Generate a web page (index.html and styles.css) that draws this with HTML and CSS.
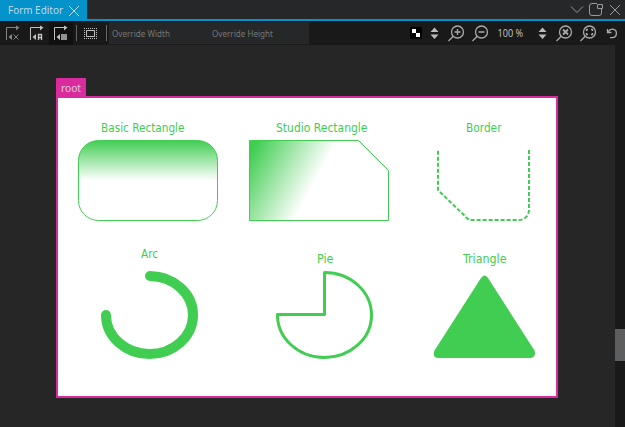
FILE: index.html
```html
<!DOCTYPE html>
<html lang="en">
<head>
<meta charset="utf-8">
<title>Form Editor</title>
<link rel="stylesheet" href="styles.css">
</head>
<body>
<header class="tabs">
  <div class="tab">
    <svg width="87" height="19"><text x="8" y="13.5" textLength="55" lengthAdjust="spacingAndGlyphs">Form Editor</text><path d="M69 6l10 10M79 6l-10 10" class="line"/></svg>
  </div>
  <svg class="window" width="57" height="19" viewBox="568 0 57 19">
    <path d="M571 6.500l6 6 6-6M610 5l10 10M620 5l-10 10"/>
    <path d="M597 3.500h-5q-2.500 0-2.500 2.500v7q0 2.500 2.500 2.500h7q2.500 0 2.500-2.500v-4M597.500 4.500h5v4h-5z"/>
  </svg>
</header>
<nav class="toolbar">
  <svg width="24" height="24" viewBox="0 21 24 24" class="dim"><path d="M6.500 40V27.500H19" class="line"/><path d="M12 34v6l-3.500-3zM16 25.500l3.500 2-3.500 3z" fill="currentColor"/><path d="M13.500 34.500l5 5M18.500 34.500l-5 5" class="line"/></svg>
  <svg width="25" height="24" viewBox="24 21 25 24"><path d="M30.500 40V27.500H43" class="line"/><path d="M36 34v6l-3.500-3zM40 25.500l3.500 2-3.500 3z" fill="currentColor"/><path d="M38.500 40v-5.500h3V40M38.500 37.500h3" class="line letter"/></svg>
  <svg class="active" width="24" height="24" viewBox="49 21 24 24"><path d="M54.500 40V27.500H67" class="line"/><path d="M60 34v6l-3.500-3zM64 25.500l3.500 2-3.500 3z" fill="currentColor"/><path d="M61 34h6v6h-6z" fill="#929292"/></svg>
  <svg width="36" height="24" viewBox="73 21 36 24"><path d="M76.500 25v16M106.500 25v16" stroke="#666"/><path d="M84 28.500h13M84 38.500h13M84.500 30v8M96.500 30v8" class="dots"/><path d="M86.500 30.500h8v6h-8z" class="marquee"/></svg>
  <div class="fields"><svg width="200" height="22"><text x="3" y="15" textLength="58" lengthAdjust="spacingAndGlyphs">Override Width</text><text x="103" y="15" textLength="61" lengthAdjust="spacingAndGlyphs">Override Height</text></svg></div>
  <svg class="right" width="216" height="24" viewBox="409 21 216 24">
    <path d="M410 27h12v12h-12z" fill="#000"/><path d="M412 29h4v4h-4zM416 33h4v4h-4z" fill="#fff"/>
    <path d="M430.500 32l4-4.500 4 4.500zM430.500 34.500l4 4.500 4-4.500zM538.500 32l4-4.500 4 4.500zM538.500 34.500l4 4.500 4-4.500z" fill="#bbb"/>
    <g class="lens"><circle cx="457.500" cy="32" r="6"/><path d="M453 36.500l-4.500 4.500M454.500 32h6M457.500 29v6"/></g>
    <g class="lens"><circle cx="481.500" cy="32" r="6"/><path d="M477 36.500l-4.500 4.500M478.500 32h6"/></g>
    <text class="zoom" x="497.500" y="37" textLength="25.500" lengthAdjust="spacingAndGlyphs">100 %</text>
    <g class="lens"><circle cx="565.500" cy="32" r="6"/><path d="M561 36.500l-4.500 4.500"/><path d="M563 29.500l5 5M568 29.500l-5 5" stroke-width="1.800"/></g>
    <g class="lens"><circle cx="589.500" cy="32" r="6"/><path d="M585 36.500l-4.500 4.500M588 29.500h-1.500v1.500M591 29.500h1.500v1.500M588 34.500h-1.500v-1.500M591 34.500h1.500v-1.500"/></g>
    <g class="lens"><path d="M607.500 29v3.500h4"/><path d="M608 32q2-3.500 5-2.800a4.300 4.300 0 0 1-1 8.500h-2"/></g>
  </svg>
</nav>
<main class="workspace">
  <section class="canvas">
    <div class="root-label"><svg width="30" height="18"><text x="5" y="14" textLength="20" lengthAdjust="spacingAndGlyphs">root</text></svg></div>
    <div class="root">
      <svg viewBox="58 98 174 134">
        <defs><linearGradient id="down" x1="0" y1="0" x2="0" y2="1"><stop stop-color="#41cd52"/><stop offset=".5" stop-color="#fff"/></linearGradient></defs>
        <text x="101" y="132" textLength="83.500" lengthAdjust="spacingAndGlyphs">Basic Rectangle</text>
        <rect x="78.500" y="140.500" width="139" height="80" rx="20" fill="url(#down)" stroke="#41cd52"/>
      </svg>
      <svg viewBox="232 98 174 134">
        <defs><linearGradient id="across" gradientUnits="userSpaceOnUse" x1="252" y1="150" x2="314" y2="184"><stop stop-color="#41cd52"/><stop offset="1" stop-color="#fff"/></linearGradient></defs>
        <text x="276" y="132" textLength="91.500" lengthAdjust="spacingAndGlyphs">Studio Rectangle</text>
        <path d="M249.500 140.500h109l30 30v50h-139z" fill="url(#across)" stroke="#41cd52"/>
      </svg>
      <svg viewBox="406 98 150 134">
        <text x="466" y="132" textLength="35.500" lengthAdjust="spacingAndGlyphs">Border</text>
        <path d="M529 150v60a10 10 0 0 1-10 10h-50l-31-30v-40" class="dashed"/>
      </svg>
      <svg viewBox="58 232 174 164">
        <text x="141" y="258" textLength="17" lengthAdjust="spacingAndGlyphs">Arc</text>
        <path d="M150 276a43.500 39 0 1 1-44 39" class="arc"/>
      </svg>
      <svg viewBox="232 232 174 164">
        <text x="317" y="263" textLength="16.500" lengthAdjust="spacingAndGlyphs">Pie</text>
        <path d="M324.500 314.500v-42a47 42.500 0 1 1-47 42z" class="pie"/>
      </svg>
      <svg viewBox="406 232 150 164">
        <text x="463" y="263" textLength="43.500" lengthAdjust="spacingAndGlyphs">Triangle</text>
        <path d="M481 278q3.500-5 7 0l46.500 72.500q2 7-4 7.500h-93q-5.500-1-3-7.500z" fill="#41cd52"/>
      </svg>
    </div>
  </section>
  <aside class="scrollbar"><div class="thumb"></div></aside>
</main>
</body>
</html>
```
FILE: styles.css
```css
* { box-sizing: border-box; }
body { margin: 0; width: 625px; height: 427px; overflow: hidden; background: #262626; font-family: "Open Sans", sans-serif; }
svg { display: block; flex: none; }
.tabs { display: flex; justify-content: space-between; height: 21px; background: #262728; border-bottom: 2px solid #0492cb; }
.tab { height: 20px; background: #0492cb; color: #b9dceb; font-family: "Noto Sans", sans-serif; font-size: 11px; }
.tab text { fill: #b9dceb; }
.line { fill: none; stroke: currentColor; }
.letter { stroke-width: 1.400; }
.window { fill: none; stroke: #999; }
.toolbar { display: flex; height: 24px; background: #191919; color: #c0c0c0; }
.dim { color: #858585; }
.active { background: #101010; }
.dots { stroke: #c0c0c0; stroke-dasharray: 1 1; }
.marquee { fill: none; stroke: #c0c0c0; }
.fields { width: 200px; height: 22px; margin-top: 1px; background: #262728; font-family: "Noto Sans", sans-serif; font-size: 9px; }
.fields text { fill: #777; }
.right { margin-left: auto; }
.lens { fill: none; stroke: #aaa; stroke-width: 1.300; }
.zoom { font-size: 10px; fill: #c8c8c8; }
.workspace { display: flex; height: 382px; }
.canvas { flex: 1; padding: 33px 0 0 56px; }
.root-label { width: 30px; height: 18px; border-radius: 1px 0 0; background: #d92b9e; font-family: "Noto Sans", sans-serif; font-size: 11px; }
.root-label text { fill: #e9c7dc; }
.root { display: grid; grid-template: 134px 164px / 174px 174px 150px; width: 502px; height: 302px; border: 2px solid #d92b9e; background: #fff; }
.root svg { width: 100%; height: 100%; }
.root text { font-family: "DejaVu Sans Condensed", "DejaVu Sans", sans-serif; font-size: 12px; fill: #41cd52; }
.dashed { fill: none; stroke: #41cd52; stroke-width: 2; stroke-dasharray: 4 2; }
.arc { fill: none; stroke: #41cd52; stroke-width: 10; stroke-linecap: round; }
.pie { fill: none; stroke: #41cd52; stroke-width: 3; stroke-linejoin: round; }
.scrollbar { width: 10px; background: #191919; padding-top: 284px; }
.thumb { height: 32px; background: #5d5e5f; }
```
